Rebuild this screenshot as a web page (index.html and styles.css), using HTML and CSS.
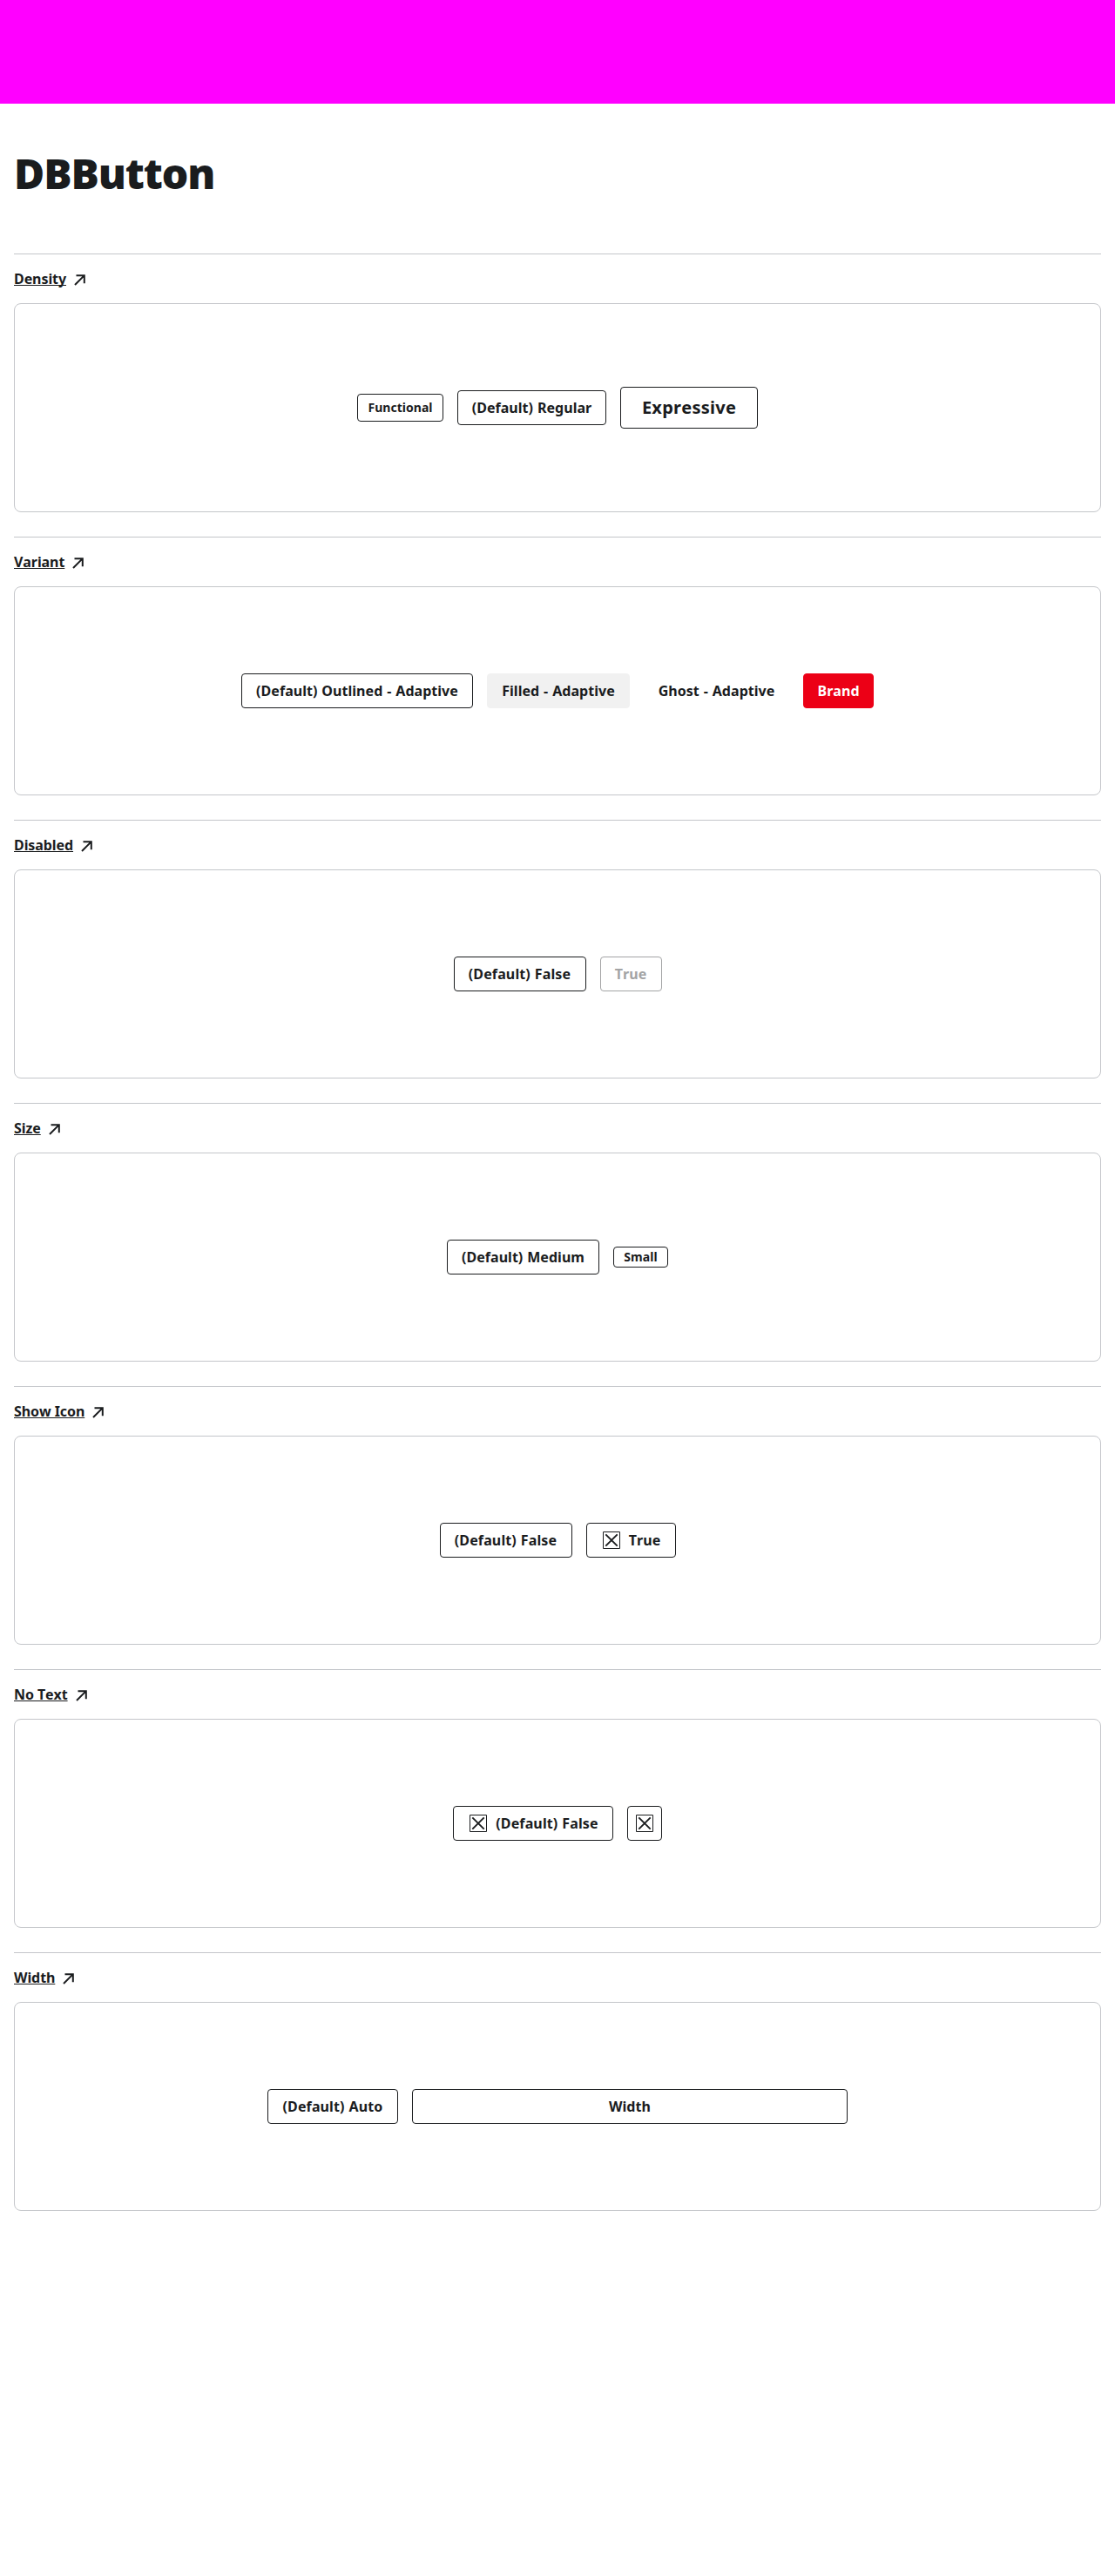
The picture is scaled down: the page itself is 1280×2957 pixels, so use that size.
FILE: index.html
```
<!DOCTYPE html>
<html lang="en">
<head>
<meta charset="utf-8">
<title>DBButton</title>
<link rel="stylesheet" href="styles.css">
</head>
<body>
<svg class="defs" aria-hidden="true">
  <symbol id="arrow" viewBox="0 0 13 13"><path d="M2.5 1.2H11.8V10.2M11.6 1.4L1 12" fill="none" stroke="currentColor" stroke-width="2"/></symbol>
  <symbol id="cross" viewBox="0 0 24 24"><path d="M2.5 2.5H21.5V21.5H2.5Z" fill="none" stroke="currentColor"/><path d="M5.3 5.3L18.7 18.7M18.7 5.3L5.3 18.7" fill="none" stroke="currentColor" stroke-width="1.9"/></symbol>
</svg>
<header class="banner"></header>
<main class="page">
  <h1 class="title">DBButton</h1>

  <section class="group">
    <a class="link"><span class="link-text">Density</span><svg class="arrow"><use href="#arrow"/></svg></a>
    <div class="card">
      <button class="btn functional w99">Functional</button>
      <button class="btn w171">(Default) Regular</button>
      <button class="btn expressive w158">Expressive</button>
    </div>
  </section>

  <section class="group">
    <a class="link"><span class="link-text">Variant</span><svg class="arrow"><use href="#arrow"/></svg></a>
    <div class="card">
      <button class="btn w266">(Default) Outlined - Adaptive</button>
      <button class="btn filled w164">Filled - Adaptive</button>
      <button class="btn ghost w167">Ghost - Adaptive</button>
      <button class="btn brand w81">Brand</button>
    </div>
  </section>

  <section class="group">
    <a class="link"><span class="link-text">Disabled</span><svg class="arrow"><use href="#arrow"/></svg></a>
    <div class="card">
      <button class="btn loose w152">(Default) False</button>
      <button class="btn disabled w71" disabled>True</button>
    </div>
  </section>

  <section class="group">
    <a class="link"><span class="link-text">Size</span><svg class="arrow"><use href="#arrow"/></svg></a>
    <div class="card">
      <button class="btn w175">(Default) Medium</button>
      <button class="btn small w63">Small</button>
    </div>
  </section>

  <section class="group">
    <a class="link"><span class="link-text">Show Icon</span><svg class="arrow"><use href="#arrow"/></svg></a>
    <div class="card">
      <button class="btn loose w152">(Default) False</button>
      <button class="btn w103"><svg class="icon"><use href="#cross"/></svg>True</button>
    </div>
  </section>

  <section class="group">
    <a class="link"><span class="link-text">No Text</span><svg class="arrow"><use href="#arrow"/></svg></a>
    <div class="card">
      <button class="btn loose w184"><svg class="icon"><use href="#cross"/></svg>(Default) False</button>
      <button class="btn w40" aria-label="False"><svg class="icon"><use href="#cross"/></svg></button>
    </div>
  </section>

  <section class="group">
    <a class="link"><span class="link-text">Width</span><svg class="arrow"><use href="#arrow"/></svg></a>
    <div class="card">
      <button class="btn loose w150">(Default) Auto</button>
      <button class="btn w500">Width</button>
    </div>
  </section>
</main>
</body>
</html>
```
FILE: styles.css
```
* { box-sizing: border-box; }
body {
  margin: 0;
  min-height: 2957px;
  background: #fff;
  color: #1a1c1e;
  font: 700 16px/24px "Noto Sans", "Open Sans", sans-serif;
  font-kerning: none;
}
.defs { display: none; }
.banner { height: 119px; background: #f0f; }
.page { padding: 50px 16px 0; }
.title {
  margin: 0 0 62px;
  font-size: 48px;
  line-height: 60px;
  font-weight: 900;
  letter-spacing: -1.1px;
}
.group {
  border-top: 1px solid #c4c6ca;
  padding: 16px 0 28px;
}
.link { display: flex; align-items: center; height: 24px; margin-bottom: 16px; }
.link-text {
  text-decoration: underline;
  text-decoration-thickness: 1px;
  text-underline-offset: 1px;
  text-decoration-skip-ink: none;
  letter-spacing: -0.08px;
}
.arrow { width: 13px; height: 13px; margin: 3px 0 0 9px; }
.card {
  display: flex;
  align-items: center;
  justify-content: center;
  gap: 16px;
  height: 240px;
  border: 1px solid #c4c6ca;
  border-radius: 8px;
}
.btn {
  display: flex;
  align-items: center;
  justify-content: center;
  gap: 8px;
  height: 40px;
  padding: 0;
  border: 1px solid #1a1c1e;
  border-radius: 4px;
  background: #fff;
  color: inherit;
  font: inherit;
  font-kerning: none;
  letter-spacing: 0.04px;
  word-spacing: 0.7px;
  white-space: nowrap;
}
.loose { letter-spacing: 0.12px; }
.functional { height: 32px; font-size: 14px; line-height: 20px; }
.expressive { height: 48px; font-size: 20px; line-height: 28px; letter-spacing: 0.25px; }
.small { height: 24px; font-size: 14px; line-height: 20px; }
.filled { background: #f1f1f1; border-color: #f1f1f1; }
.ghost { border-color: transparent; }
.brand { background: #ec0016; border-color: #ec0016; color: #fff; }
.disabled { color: #a3a4a5; border-color: #a3a4a5; }
.icon { width: 24px; height: 24px; flex: none; }
.w40 { width: 40px; }
.w63 { width: 63px; }
.w71 { width: 71px; }
.w81 { width: 81px; }
.w99 { width: 99px; }
.w103 { width: 103px; }
.w150 { width: 150px; }
.w152 { width: 152px; }
.w158 { width: 158px; }
.w164 { width: 164px; }
.w167 { width: 167px; }
.w171 { width: 171px; }
.w175 { width: 175px; }
.w184 { width: 184px; }
.w266 { width: 266px; }
.w500 { width: 500px; }
```
